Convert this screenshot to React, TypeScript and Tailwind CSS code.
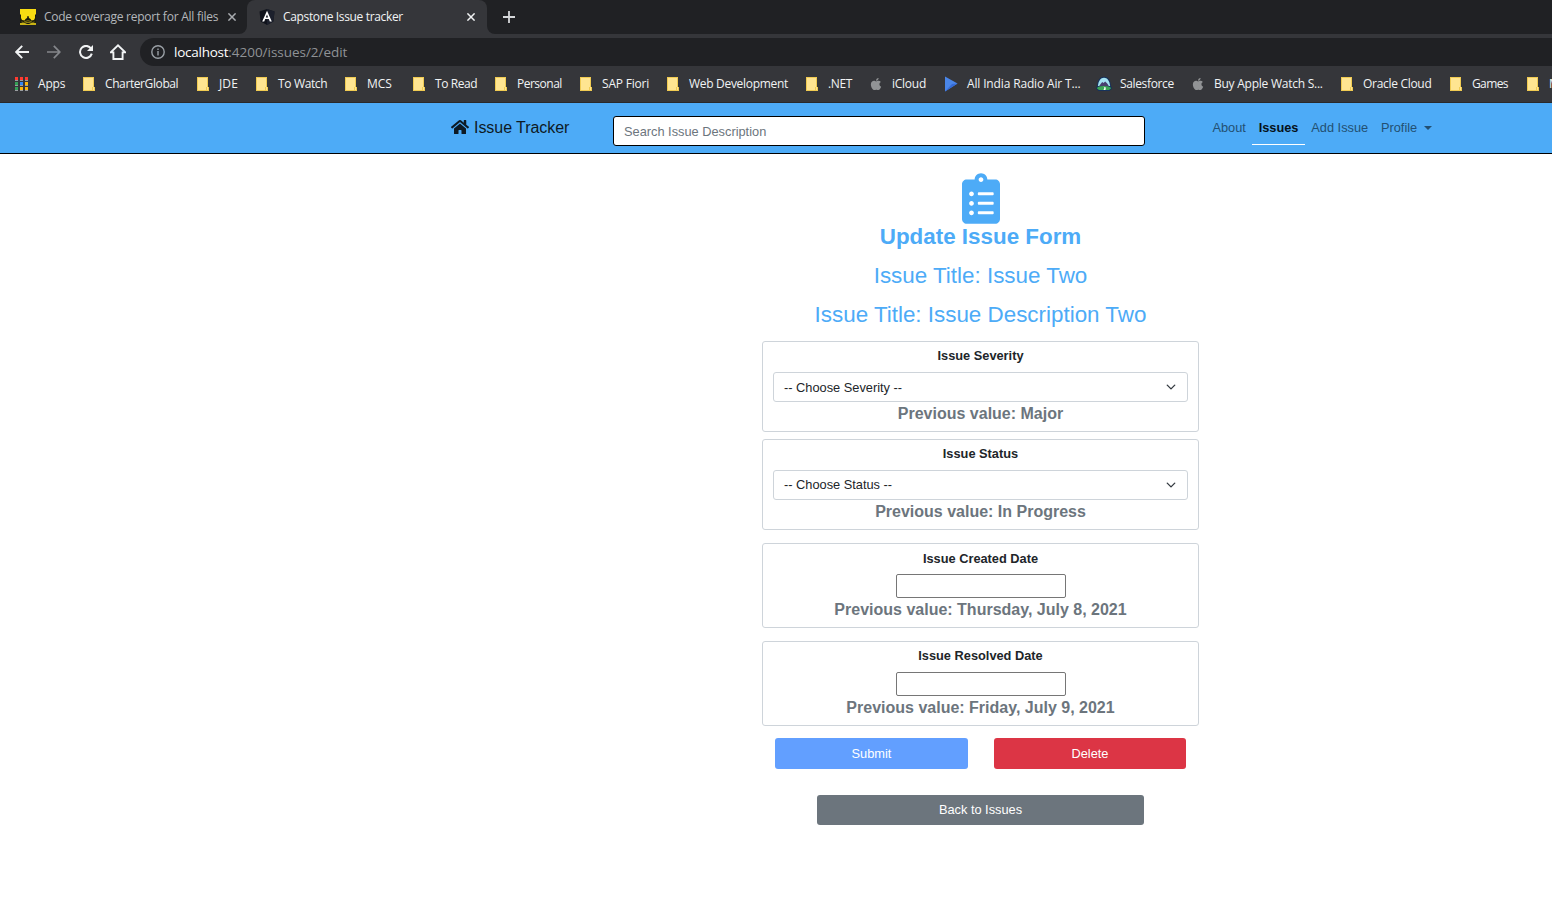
import React from "react";
import { FaApple, FaHome } from "react-icons/fa";

function FolderIcon() {
  return (
    <svg className="block h-[14px] w-[12px]" viewBox="0 0 12 14" shapeRendering="crispEdges">
      <path d="M0 0h11v10h1v4H0z" fill="#f0cb52" />
      <path d="M1 1h9v12H1z" fill="#ffe591" />
      <path d="M9 10h1v3H9z" fill="#f0cb52" />
      <path d="M10 10h1v3h-1z" fill="#ffe591" />
    </svg>
  );
}

const appColors = ["#ff3b30", "#ff3b30", "#ff3b30", "#34a056", "#2f86f6", "#fbb40a", "#34a056", "#fbb40a", "#fbb40a"];

function AppsIcon() {
  return (
    <svg className="block h-[14px] w-[13px]" viewBox="0 0 13 14" shapeRendering="crispEdges">
      {appColors.map((c, i) => (
        <g key={i}>
          <rect x={(i % 3) * 5} y={Math.floor(i / 3) * 5} width="3" height="3" fill={c} />
          <rect x={(i % 3) * 5} y={Math.floor(i / 3) * 5 + 3} width="3" height="1" fill="#9a9da1" />
        </g>
      ))}
    </svg>
  );
}

function AppleIcon() {
  return <FaApple className="block h-[14px] w-[12px] text-[#919395]" />;
}

function PlayIcon() {
  return (
    <svg className="block h-[16px] w-[14px]" viewBox="0 0 14 16">
      <path d="M1 0.500L13.500 7.500L1 15.500z" fill="#4a86e8" />
      <path d="M1 15.500L13.500 7.500L8 8z" fill="#356ad6" />
    </svg>
  );
}

function SalesforceIcon() {
  return (
    <svg className="block h-[16px] w-[16px]" viewBox="0 0 16 16">
      <path d="M8 0.800C4 0.800 1.600 4 1.200 9L0 12.500L2.500 15H13.500L16 12.500L14.800 9C14.400 4 12 0.800 8 0.800z" fill="#16325c" />
      <path d="M8 1.800C4.600 1.800 2.400 5 1.900 10h12.200C13.600 5 11.400 1.800 8 1.800z" fill="#a4e2f2" />
      <path d="M2.800 10.500L5 7.500L6.300 6l1.200 1L9.200 5.600l2 1.800 2 3.100z" fill="#49406f" />
      <path d="M1.800 11c3.800-1.300 8.600-1.300 12.400 0l0.800 1.500-2 1.600H3l-2-1.600z" fill="#3ba755" />
      <path d="M7.500 10.500l1 1.300-1 2.200h2l0.300-2.400z" fill="#fff" />
    </svg>
  );
}

type Bookmark = { label: string; kind?: "apps" | "apple" | "play" | "sf"; w: string; gap: string; t: string };

const bookmarks: Bookmark[] = [
  { label: "Apps", kind: "apps", w: "w-[68px]", gap: "w-[23px]", t: "tracking-[-0.2px]" },
  { label: "CharterGlobal", w: "w-[114px]", gap: "w-[22px]", t: "tracking-[-0.4px]" },
  { label: "JDE", w: "w-[59px]", gap: "w-[22px]", t: "tracking-[0.1px]" },
  { label: "To Watch", w: "w-[89px]", gap: "w-[22px]", t: "tracking-[-0.35px]" },
  { label: "MCS", w: "w-[68px]", gap: "w-[22px]", t: "tracking-[0px]" },
  { label: "To Read", w: "w-[82px]", gap: "w-[22px]", t: "tracking-[-0.4px]" },
  { label: "Personal", w: "w-[85px]", gap: "w-[22px]", t: "tracking-[-0.5px]" },
  { label: "SAP Fiori", w: "w-[87px]", gap: "w-[22px]", t: "tracking-[-0.2px]" },
  { label: "Web Development", w: "w-[139px]", gap: "w-[22px]", t: "tracking-[-0.3px]" },
  { label: ".NET", w: "w-[64px]", gap: "w-[22px]", t: "tracking-[-0.4px]" },
  { label: "iCloud", kind: "apple", w: "w-[74px]", gap: "w-[22px]", t: "tracking-[-0.25px]" },
  { label: "All India Radio Air T...", kind: "play", w: "w-[152px]", gap: "w-[23px]", t: "tracking-[-0.15px]" },
  { label: "Salesforce", kind: "sf", w: "w-[96px]", gap: "w-[24px]", t: "tracking-[-0.35px]" },
  { label: "Buy Apple Watch S...", kind: "apple", w: "w-[149px]", gap: "w-[22px]", t: "tracking-[-0.25px]" },
  { label: "Oracle Cloud", w: "w-[109px]", gap: "w-[22px]", t: "tracking-[-0.3px]" },
  { label: "Games", w: "w-[77px]", gap: "w-[22px]", t: "tracking-[-0.6px]" },
  { label: "M", w: "w-[60px]", gap: "w-[22px]", t: "tracking-[0px]" },
];

function BookmarkIcon({ kind }: { kind?: Bookmark["kind"] }) {
  if (kind === "apps") return <AppsIcon />;
  if (kind === "apple") return <AppleIcon />;
  if (kind === "play") return <PlayIcon />;
  if (kind === "sf") return <SalesforceIcon />;
  return <FolderIcon />;
}

function CloseIcon({ color }: { color: string }) {
  return (
    <svg className="block h-[8px] w-[8px]" viewBox="0 0 8 8" stroke={color} strokeWidth="1.5">
      <path d="M0.4 0.4L7.6 7.6M7.6 0.4L0.4 7.6" />
    </svg>
  );
}

function BrowserChrome() {
  return (
    <div className="h-[103px] border-b border-[#29292b] bg-[#35363a] font-['Open_Sans','Noto_Sans',sans-serif] text-[12px]">
      <div className="flex h-[34px] bg-[#35363a]">
        <div className="flex w-[247px] items-center rounded-br-[8px] bg-[#202124] pl-[20px]">
          <svg className="block h-[16px] w-[16px] shrink-0" viewBox="0 0 16 16">
            <rect width="16" height="16" fill="#f8dc12" />
            <path d="M0 5.500h1V9l1 2 2.500 0.500 1-1.500 1.500-1 0.500-2h1l0.500 2 1.500 1 1 1.500L14 11l1-2V5.500h1V14H0z" fill="#1c1c0c" />
            <path d="M1.500 13l2 0.500 1.500-1 3-0.800 3 0.800 1.500 1 2-0.500" fill="none" stroke="#8a7b12" />
            <path d="M0 14h4l4-1 4 1h4v2H0z" fill="#c9b315" />
            <path d="M5 15l3-1.500 3 1.500z" fill="#1c1c0c" />
          </svg>
          <span className="ml-[8px] w-[184px] whitespace-nowrap tracking-[-0.25px] text-[#b4b7bb]">Code coverage report for All files</span>
          <CloseIcon color="#a9acb0" />
        </div>
        <div className="w-[240px] bg-[#202124]">
          <div className="flex h-[34px] items-center rounded-t-[8px] bg-[#35363a] pl-[12px]">
            <svg className="block h-[16px] w-[16px] shrink-0" viewBox="0 0 16 16">
              <path d="M8 0l7.500 2.600-1.100 9.800L8 16l-6.400-3.600L0.500 2.600z" fill="#10131c" />
              <path d="M8 0l7.500 2.600-1.100 9.800L8 16z" fill="#1c202c" />
              <path d="M8 1.800L3.200 12.400h2l1-2.400h3.600l1 2.400h2zM8 5.400l1.200 3H6.800z" fill="#fff" fillRule="evenodd" />
            </svg>
            <span className="ml-[8px] w-[184px] whitespace-nowrap tracking-[-0.35px] text-[#f1f3f4]">Capstone Issue tracker</span>
            <CloseIcon color="#f1f3f4" />
          </div>
        </div>
        <div className="flex flex-1 items-center rounded-bl-[8px] bg-[#202124] pl-[16px]">
          <svg className="block h-[12px] w-[12px]" viewBox="0 0 12 12" stroke="#d5d7da" strokeWidth="1.8">
            <path d="M6 0v12M0 6h12" />
          </svg>
        </div>
      </div>
      <div className="flex h-[36px] items-center">
        <svg className="ml-[15px] block h-[14px] w-[14px]" viewBox="0 0 14 14" fill="none" stroke="#f1f3f4" strokeWidth="1.9">
          <path d="M14 7H1.5M7.2 0.8L1.2 7l6 6.2" />
        </svg>
        <svg className="ml-[18px] block h-[14px] w-[14px]" viewBox="0 0 14 14" fill="none" stroke="#85878b" strokeWidth="1.7">
          <path d="M0 7h12.500M6.800 0.800l6 6.200-6 6.200" />
        </svg>
        <svg className="ml-[18px] block h-[14px] w-[14px]" viewBox="0 0 14 14" fill="none" stroke="#f1f3f4" strokeWidth="2">
          <path d="M12 3.500A6 6 0 1 0 12.800 8.600" />
          <path d="M14 0v6H8z" fill="#f1f3f4" stroke="none" />
        </svg>
        <svg className="ml-[17px] block h-[16px] w-[16px]" viewBox="0 0 16 16" fill="none" stroke="#f1f3f4" strokeWidth="1.9">
          <path d="M0.800 8.400H3.400V15H12.600V8.400H15.200L8 1.400z" />
        </svg>
        <div className="ml-[14px] flex h-[28px] flex-1 items-center rounded-l-full bg-[#202124] pl-[11px]">
          <svg className="block h-[14px] w-[14px]" viewBox="0 0 14 14" fill="none" stroke="#9aa0a6" strokeWidth="1.4">
            <circle cx="7" cy="7" r="6.2" />
            <path d="M7 6v4.4M7 3.4v1.5" />
          </svg>
          <span className="ml-[9px] whitespace-nowrap text-[13.5px] tracking-[-0.03px] text-[#8f9296]">
            <span className="tracking-[-0.25px] text-white">localhost</span>:4200/issues/2/edit
          </span>
        </div>
      </div>
      <div className="flex h-[28px] items-center overflow-hidden pl-[15px]">
        {bookmarks.map((b) => (
          <div key={b.label} className={`flex shrink-0 items-center ${b.w}`}>
            <span className={`shrink-0 ${b.gap}`}>
              <BookmarkIcon kind={b.kind} />
            </span>
            <span className={`whitespace-nowrap text-[#f1f3f4] ${b.t}`}>{b.label}</span>
          </div>
        ))}
      </div>
    </div>
  );
}

function Navbar() {
  return (
    <nav className="flex h-[51px] items-start border-b border-black bg-[#4dabf7]">
      <div className="ml-[451px] mt-[12px] flex h-[24px] w-[162px] items-center text-[16px] text-[#0d1a25]">
        <FaHome className="mr-[5px] h-[18px] w-[18px]" />
        <span className="pt-[2px] tracking-[-0.05px]">Issue Tracker</span>
      </div>
      <input
        className="mt-[13px] h-[30px] w-[532px] rounded-[3px] border border-black bg-white px-[10px] text-[12.8px] placeholder:text-[#6c757d]"
        placeholder="Search Issue Description"
      />
      <div className="ml-[61px] mt-[8px] flex text-[12.8px] leading-[19px] text-[#235072]">
        <a className="block px-[6.4px] py-[7px]">About</a>
        <a className="block h-[34px] border-b border-white px-[6.4px] py-[7px] font-bold text-[#06111a]">Issues</a>
        <a className="block px-[6.4px] py-[7px]">Add Issue</a>
        <a className="flex h-[33px] items-center px-[6.4px]">
          Profile
          <span className="ml-[7px] border-x-4 border-t-4 border-x-transparent border-t-[#235072]" />
        </a>
      </div>
    </nav>
  );
}

function Card({ title, previous, className, children }: { title: string; previous: string; className: string; children: React.ReactNode }) {
  return (
    <section className={`flex flex-col items-center rounded-[3px] border border-[#ced4da] px-[10px] ${className}`}>
      <label className="text-[12.8px] font-bold leading-[19px] text-[#212529]">{title}</label>
      {children}
      <p className="text-[16px] font-bold leading-[24px] text-[#6c757d]">{previous}</p>
    </section>
  );
}

function Select({ text, nudge = "" }: { text: string; nudge?: string }) {
  return (
    <div className="mt-[7px] flex h-[30px] w-full shrink-0 items-center justify-between rounded-[3px] border border-[#ced4da] pl-[10px] pr-[11px] text-[12.8px] text-[#212529]">
      <span className={nudge}>{text}</span>
      <svg className="block h-[10px] w-[10px]" viewBox="0 0 16 16" fill="none" stroke="#343a40" strokeWidth="2.2" strokeLinecap="round" strokeLinejoin="round">
        <path d="M2 5l6 6 6-6" />
      </svg>
    </div>
  );
}

function DateInput({ label }: { label: string }) {
  return <input aria-label={label} className="h-[24px] w-[170px] shrink-0 rounded-[2px] border border-[#767676] bg-white" />;
}

export default function App() {
  return (
    <div className="h-[912px] w-[1552px] overflow-hidden bg-white font-['Liberation_Sans',Arial,sans-serif]">
      <BrowserChrome />
      <Navbar />
      <main className="ml-[762px] flex w-[437px] flex-col">
        <svg className="mt-[19px] h-[51px] w-[38px] self-center" viewBox="0 0 384 512" fill="#4dabf7">
          <path d="M336 64h-80c0-35.300-28.700-64-64-64s-64 28.700-64 64H48C21.500 64 0 85.500 0 112v352c0 26.500 21.500 48 48 48h288c26.500 0 48-21.500 48-48V112c0-26.500-21.500-48-48-48zM96 424c-13.300 0-24-10.700-24-24s10.700-24 24-24 24 10.700 24 24-10.700 24-24 24zm0-96c-13.300 0-24-10.700-24-24s10.700-24 24-24 24 10.700 24 24-10.700 24-24 24zm0-96c-13.300 0-24-10.700-24-24s10.700-24 24-24 24 10.700 24 24-10.700 24-24 24zm96-192c13.300 0 24 10.700 24 24s-10.700 24-24 24-24-10.700-24-24 10.700-24 24-24zm128 368c0 4.400-3.600 8-8 8H168c-4.400 0-8-3.600-8-8v-16c0-4.400 3.600-8 8-8h144c4.400 0 8 3.600 8 8v16zm0-96c0 4.400-3.600 8-8 8H168c-4.400 0-8-3.600-8-8v-16c0-4.400 3.600-8 8-8h144c4.400 0 8 3.600 8 8v16zm0-96c0 4.400-3.600 8-8 8H168c-4.400 0-8-3.600-8-8v-16c0-4.400 3.600-8 8-8h144c4.400 0 8 3.600 8 8v16z" />
        </svg>
        <div className="-mt-px flex flex-col gap-[12px] text-center text-[22.4px] leading-[27px] text-[#4dabf7]">
          <h1 className="font-bold">Update Issue Form</h1>
          <h2>Issue Title: Issue Two</h2>
          <h2>Issue Title: Issue Description Two</h2>
        </div>
        <Card title="Issue Severity" previous="Previous value: Major" className="mt-[13px] h-[91px] pt-[4px]">
          <Select text="-- Choose Severity --" nudge="pt-[2px]" />
        </Card>
        <Card title="Issue Status" previous="Previous value: In Progress" className="mt-[7px] h-[91px] pt-[4px]">
          <Select text="-- Choose Status --" />
        </Card>
        <Card title="Issue Created Date" previous="Previous value: Thursday, July 8, 2021" className="mt-[13px] h-[85px] pt-[5px]">
          <div className="mt-[6px] flex">
            <DateInput label="Issue Created Date" />
          </div>
        </Card>
        <Card title="Issue Resolved Date" previous="Previous value: Friday, July 9, 2021" className="mt-[13px] h-[85px] pt-[4px]">
          <div className="mt-[7px] flex">
            <DateInput label="Issue Resolved Date" />
          </div>
        </Card>
        <div className="mt-[12px] flex gap-[26px] px-[13px] text-[12.8px] text-white">
          <button className="h-[31px] w-[193px] rounded-[3px] bg-[#629fff]">Submit</button>
          <button className="h-[31px] w-[192px] rounded-[3px] bg-[#dc3545]">Delete</button>
        </div>
        <button className="mt-[26px] h-[30px] w-[327px] self-center rounded-[3px] bg-[#6c757d] text-[12.8px] text-white">Back to Issues</button>
      </main>
    </div>
  );
}
